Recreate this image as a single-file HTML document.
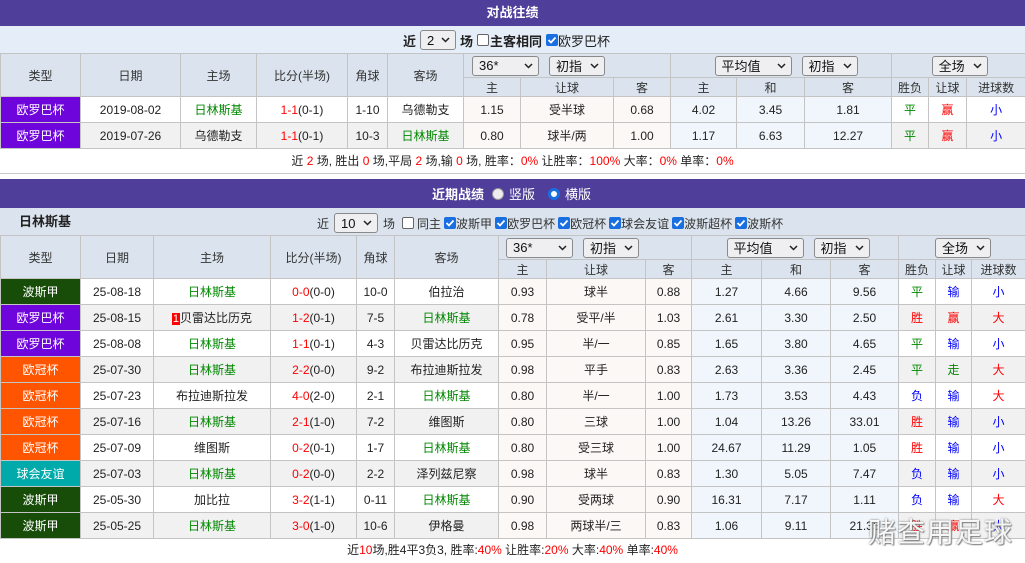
<!DOCTYPE html>
<html><head><meta charset="utf-8">
<style>
*{margin:0;padding:0;box-sizing:border-box}
body{width:1025px;height:563px;overflow:hidden;background:#fff;font-family:"Liberation Sans","Noto Sans CJK SC",sans-serif;font-size:12px;color:#222;position:relative}
.ab{position:absolute}
.bar{position:absolute;left:0;width:1025px;background:#4f3f9a;color:#fff;font-weight:bold;font-size:13px}
table{position:absolute;left:0;border-collapse:collapse;table-layout:fixed;width:1025px}
td{border:1px solid #c4c4c4;text-align:center;white-space:nowrap;overflow:hidden;font-size:12px}
.h td{background:#dbe4ee;color:#333}
.sel{display:inline-flex;align-items:center;justify-content:space-between;height:20px;border:1px solid #8a8a8a;border-radius:3px;background:#efeff2;padding:0 5px 0 6px;font-size:13px;color:#111;vertical-align:middle}
.sel svg{margin-left:6px}
.cb{display:inline-block;width:12px;height:12px;border-radius:2px;background:#1a6fe0;vertical-align:-1px;position:relative}
.cbo{display:inline-block;width:12px;height:12px;border:1px solid #666;border-radius:2px;background:#fff;vertical-align:-1px}
.t1{background:#6e06dc;color:#fff}.t2{background:#ff5400;color:#fff}.t3{background:#174d08;color:#fff}.t4{background:#00a9aa;color:#fff}
.g{color:#008800}.r{color:#f00}.b{color:#00f}
.o1{background:#fcf8f5}.o2{background:#f0f6fb}
.gr td.x{background:#f1f1f1}
</style></head><body>

<div class="bar" style="top:0;height:26px;line-height:26px;text-align:center;padding-left:0">对战往绩</div>
<div class="ab" style="top:26px;left:0;width:1025px;height:27px;background:#e5eef8"></div>
<div class="ab" style="top:30px;left:403px;height:20px;display:flex;align-items:center;font-size:13px;font-weight:bold;gap:4px">
<span>近</span><span class="sel" style="width:36px;font-weight:normal">2<svg width="9" height="6"><path d="M1 1L4.5 4.5L8 1" stroke="#222" stroke-width="1.5" fill="none"/></svg></span><span>场</span><span class="cbo"></span><span style="margin-left:-3px">主客相同</span><span class="cb"><svg width="12" height="12" style="position:absolute;left:0;top:0"><path d="M2.5 6L5 8.5L9.5 3.5" stroke="#fff" stroke-width="1.8" fill="none"/></svg></span><span style="font-weight:normal;margin-left:-4px">欧罗巴杯</span></div>

<table style="top:53px">
<colgroup><col width="80"><col width="100"><col width="76"><col width="91"><col width="40"><col width="76"><col width="57"><col width="93"><col width="57"><col width="66"><col width="68"><col width="87"><col width="37"><col width="38"><col width="59"></colgroup>
<tr class="h" style="height:24px"><td rowspan="2">类型</td><td rowspan="2">日期</td><td rowspan="2">主场</td><td rowspan="2">比分(半场)</td><td rowspan="2">角球</td><td rowspan="2">客场</td>
<td colspan="3" style="text-align:left;padding-left:8px"><span class="sel" style="width:67px">36*<svg width="9" height="6"><path d="M1 1L4.5 4.5L8 1" stroke="#222" stroke-width="1.5" fill="none"/></svg></span>&nbsp;&nbsp;&nbsp;<span class="sel" style="width:56px">初指<svg width="9" height="6"><path d="M1 1L4.5 4.5L8 1" stroke="#222" stroke-width="1.5" fill="none"/></svg></span></td>
<td colspan="3" style="padding-left:10px"><span class="sel" style="width:77px">平均值<svg width="9" height="6"><path d="M1 1L4.5 4.5L8 1" stroke="#222" stroke-width="1.5" fill="none"/></svg></span>&nbsp;&nbsp;&nbsp;<span class="sel" style="width:56px">初指<svg width="9" height="6"><path d="M1 1L4.5 4.5L8 1" stroke="#222" stroke-width="1.5" fill="none"/></svg></span></td>
<td colspan="3" style="padding-left:2px"><span class="sel" style="width:56px">全场<svg width="9" height="6"><path d="M1 1L4.5 4.5L8 1" stroke="#222" stroke-width="1.5" fill="none"/></svg></span></td></tr>
<tr class="h" style="height:19px"><td>主</td><td>让球</td><td>客</td><td>主</td><td>和</td><td>客</td><td>胜负</td><td>让球</td><td>进球数</td></tr>
<tr style="height:26px"><td class="t1">欧罗巴杯</td><td class="x">2019-08-02</td><td class="x g">日林斯基</td><td class="x"><span class="r">1-1</span>(0-1)</td><td class="x">1-10</td><td class="x">乌德勒支</td><td class="o1">1.15</td><td class="o1">受半球</td><td class="o1">0.68</td><td class="o2">4.02</td><td class="o2">3.45</td><td class="o2">1.81</td><td class="x g">平</td><td class="x r">赢</td><td class="x b">小</td></tr>
<tr class="gr" style="height:26px"><td class="t1">欧罗巴杯</td><td class="x">2019-07-26</td><td class="x">乌德勒支</td><td class="x"><span class="r">1-1</span>(0-1)</td><td class="x">10-3</td><td class="x g">日林斯基</td><td class="o1">0.80</td><td class="o1">球半/两</td><td class="o1">1.00</td><td class="o2">1.17</td><td class="o2">6.63</td><td class="o2">12.27</td><td class="x g">平</td><td class="x r">赢</td><td class="x b">小</td></tr>
</table>
<div class="ab" style="top:148px;left:0;width:1025px;height:26px;line-height:26px;text-align:center;padding-left:0;border-bottom:1px solid #c8c8c8">近 <span class="r">2</span> 场, 胜出 <span class="r">0</span> 场,平局 <span class="r">2</span> 场,输 <span class="r">0</span> 场, 胜率：<span class="r">0%</span> 让胜率：<span class="r">100%</span> 大率：<span class="r">0%</span> 单率：<span class="r">0%</span></div>

<div class="bar" style="top:179px;height:29px"></div>
<div class="ab" style="top:179px;left:432px;height:29px;display:flex;align-items:center;color:#fff;font-size:13px;gap:5px"><b>近期战绩</b><span style="display:inline-block;width:12px;height:12px;border-radius:50%;background:#eee;border:1px solid #999;margin-left:3px"></span><span>竖版</span><span style="display:inline-block;width:12px;height:12px;border-radius:50%;background:#fff;border:3px solid #1a6fe0;margin-left:8px"></span><span>横版</span></div>
<div class="ab" style="top:208px;left:0;width:1025px;height:27px;background:#dbe4ee"></div>
<div class="ab" style="top:208px;left:19px;height:27px;line-height:27px;font-weight:bold;font-size:13px">日林斯基</div>
<div class="ab" style="top:213px;left:317px;height:20px;display:flex;align-items:center;font-size:12px;gap:3px;color:#333">
<span>近</span><span class="sel" style="width:44px;margin:0 2px">10<svg width="9" height="6"><path d="M1 1L4.5 4.5L8 1" stroke="#222" stroke-width="1.5" fill="none"/></svg></span><span>场</span><span class="cbo" style="margin-left:4px"></span><span>同主</span>
<span class="cb"><svg width="12" height="12" style="position:absolute;left:0;top:0"><path d="M2.5 6L5 8.5L9.5 3.5" stroke="#fff" stroke-width="1.8" fill="none"/></svg></span><span style="margin-left:-3px">波斯甲</span>
<span class="cb"><svg width="12" height="12" style="position:absolute;left:0;top:0"><path d="M2.5 6L5 8.5L9.5 3.5" stroke="#fff" stroke-width="1.8" fill="none"/></svg></span><span style="margin-left:-3px">欧罗巴杯</span>
<span class="cb"><svg width="12" height="12" style="position:absolute;left:0;top:0"><path d="M2.5 6L5 8.5L9.5 3.5" stroke="#fff" stroke-width="1.8" fill="none"/></svg></span><span style="margin-left:-3px">欧冠杯</span>
<span class="cb"><svg width="12" height="12" style="position:absolute;left:0;top:0"><path d="M2.5 6L5 8.5L9.5 3.5" stroke="#fff" stroke-width="1.8" fill="none"/></svg></span><span style="margin-left:-3px">球会友谊</span>
<span class="cb"><svg width="12" height="12" style="position:absolute;left:0;top:0"><path d="M2.5 6L5 8.5L9.5 3.5" stroke="#fff" stroke-width="1.8" fill="none"/></svg></span><span style="margin-left:-3px">波斯超杯</span>
<span class="cb"><svg width="12" height="12" style="position:absolute;left:0;top:0"><path d="M2.5 6L5 8.5L9.5 3.5" stroke="#fff" stroke-width="1.8" fill="none"/></svg></span><span style="margin-left:-3px">波斯杯</span></div>

<table style="top:235px">
<colgroup><col width="80"><col width="73"><col width="117"><col width="86"><col width="38"><col width="104"><col width="48"><col width="99"><col width="46"><col width="70"><col width="69"><col width="68"><col width="37"><col width="36"><col width="54"></colgroup>
<tr class="h" style="height:24px"><td rowspan="2">类型</td><td rowspan="2">日期</td><td rowspan="2">主场</td><td rowspan="2">比分(半场)</td><td rowspan="2">角球</td><td rowspan="2">客场</td>
<td colspan="3" style="text-align:left;padding-left:7px"><span class="sel" style="width:67px">36*<svg width="9" height="6"><path d="M1 1L4.5 4.5L8 1" stroke="#222" stroke-width="1.5" fill="none"/></svg></span>&nbsp;&nbsp;&nbsp;<span class="sel" style="width:56px">初指<svg width="9" height="6"><path d="M1 1L4.5 4.5L8 1" stroke="#222" stroke-width="1.5" fill="none"/></svg></span></td>
<td colspan="3" style="padding-left:6px"><span class="sel" style="width:77px">平均值<svg width="9" height="6"><path d="M1 1L4.5 4.5L8 1" stroke="#222" stroke-width="1.5" fill="none"/></svg></span>&nbsp;&nbsp;&nbsp;<span class="sel" style="width:56px">初指<svg width="9" height="6"><path d="M1 1L4.5 4.5L8 1" stroke="#222" stroke-width="1.5" fill="none"/></svg></span></td>
<td colspan="3" style="padding-left:2px"><span class="sel" style="width:56px">全场<svg width="9" height="6"><path d="M1 1L4.5 4.5L8 1" stroke="#222" stroke-width="1.5" fill="none"/></svg></span></td></tr>
<tr class="h" style="height:19px"><td>主</td><td>让球</td><td>客</td><td>主</td><td>和</td><td>客</td><td>胜负</td><td>让球</td><td>进球数</td></tr>
<tr style="height:26px"><td class="t3">波斯甲</td><td class="x">25-08-18</td><td class="x g">日林斯基</td><td class="x"><span class="r">0-0</span>(0-0)</td><td class="x">10-0</td><td class="x">伯拉治</td><td class="o1">0.93</td><td class="o1">球半</td><td class="o1">0.88</td><td class="o2">1.27</td><td class="o2">4.66</td><td class="o2">9.56</td><td class="x g">平</td><td class="x b">输</td><td class="x b">小</td></tr>
<tr class="gr" style="height:26px"><td class="t1">欧罗巴杯</td><td class="x">25-08-15</td><td class="x"><span style="background:#f00;color:#fff;font-size:11px;padding:0 1px">1</span>贝雷达比历克</td><td class="x"><span class="r">1-2</span>(0-1)</td><td class="x">7-5</td><td class="x g">日林斯基</td><td class="o1">0.78</td><td class="o1">受平/半</td><td class="o1">1.03</td><td class="o2">2.61</td><td class="o2">3.30</td><td class="o2">2.50</td><td class="x r">胜</td><td class="x r">赢</td><td class="x r">大</td></tr>
<tr style="height:26px"><td class="t1">欧罗巴杯</td><td class="x">25-08-08</td><td class="x g">日林斯基</td><td class="x"><span class="r">1-1</span>(0-1)</td><td class="x">4-3</td><td class="x">贝雷达比历克</td><td class="o1">0.95</td><td class="o1">半/一</td><td class="o1">0.85</td><td class="o2">1.65</td><td class="o2">3.80</td><td class="o2">4.65</td><td class="x g">平</td><td class="x b">输</td><td class="x b">小</td></tr>
<tr class="gr" style="height:26px"><td class="t2">欧冠杯</td><td class="x">25-07-30</td><td class="x g">日林斯基</td><td class="x"><span class="r">2-2</span>(0-0)</td><td class="x">9-2</td><td class="x">布拉迪斯拉发</td><td class="o1">0.98</td><td class="o1">平手</td><td class="o1">0.83</td><td class="o2">2.63</td><td class="o2">3.36</td><td class="o2">2.45</td><td class="x g">平</td><td class="x g">走</td><td class="x r">大</td></tr>
<tr style="height:26px"><td class="t2">欧冠杯</td><td class="x">25-07-23</td><td class="x">布拉迪斯拉发</td><td class="x"><span class="r">4-0</span>(2-0)</td><td class="x">2-1</td><td class="x g">日林斯基</td><td class="o1">0.80</td><td class="o1">半/一</td><td class="o1">1.00</td><td class="o2">1.73</td><td class="o2">3.53</td><td class="o2">4.43</td><td class="x b">负</td><td class="x b">输</td><td class="x r">大</td></tr>
<tr class="gr" style="height:26px"><td class="t2">欧冠杯</td><td class="x">25-07-16</td><td class="x g">日林斯基</td><td class="x"><span class="r">2-1</span>(1-0)</td><td class="x">7-2</td><td class="x">维图斯</td><td class="o1">0.80</td><td class="o1">三球</td><td class="o1">1.00</td><td class="o2">1.04</td><td class="o2">13.26</td><td class="o2">33.01</td><td class="x r">胜</td><td class="x b">输</td><td class="x b">小</td></tr>
<tr style="height:26px"><td class="t2">欧冠杯</td><td class="x">25-07-09</td><td class="x">维图斯</td><td class="x"><span class="r">0-2</span>(0-1)</td><td class="x">1-7</td><td class="x g">日林斯基</td><td class="o1">0.80</td><td class="o1">受三球</td><td class="o1">1.00</td><td class="o2">24.67</td><td class="o2">11.29</td><td class="o2">1.05</td><td class="x r">胜</td><td class="x b">输</td><td class="x b">小</td></tr>
<tr class="gr" style="height:26px"><td class="t4">球会友谊</td><td class="x">25-07-03</td><td class="x g">日林斯基</td><td class="x"><span class="r">0-2</span>(0-0)</td><td class="x">2-2</td><td class="x">泽列兹尼察</td><td class="o1">0.98</td><td class="o1">球半</td><td class="o1">0.83</td><td class="o2">1.30</td><td class="o2">5.05</td><td class="o2">7.47</td><td class="x b">负</td><td class="x b">输</td><td class="x b">小</td></tr>
<tr style="height:26px"><td class="t3">波斯甲</td><td class="x">25-05-30</td><td class="x">加比拉</td><td class="x"><span class="r">3-2</span>(1-1)</td><td class="x">0-11</td><td class="x g">日林斯基</td><td class="o1">0.90</td><td class="o1">受两球</td><td class="o1">0.90</td><td class="o2">16.31</td><td class="o2">7.17</td><td class="o2">1.11</td><td class="x b">负</td><td class="x b">输</td><td class="x r">大</td></tr>
<tr class="gr" style="height:26px"><td class="t3">波斯甲</td><td class="x">25-05-25</td><td class="x g">日林斯基</td><td class="x"><span class="r">3-0</span>(1-0)</td><td class="x">10-6</td><td class="x">伊格曼</td><td class="o1">0.98</td><td class="o1">两球半/三</td><td class="o1">0.83</td><td class="o2">1.06</td><td class="o2">9.11</td><td class="o2">21.35</td><td class="x r">胜</td><td class="x r">赢</td><td class="x b">大</td></tr>
</table>
<div class="ab" style="top:538px;left:0;width:1025px;height:25px;line-height:25px;text-align:center;padding-right:0">近<span class="r">10</span>场,胜4平3负3, 胜率:<span class="r">40%</span> 让胜率:<span class="r">20%</span> 大率:<span class="r">40%</span> 单率:<span class="r">40%</span></div>
<div class="ab" style="top:511px;left:868px;font-size:28px;color:rgba(255,255,255,0.92);letter-spacing:1px;text-shadow:0 0 2px #777,1px 1px 1px #888;font-family:'Noto Sans CJK SC',sans-serif">赌查用足球</div>
</body></html>
